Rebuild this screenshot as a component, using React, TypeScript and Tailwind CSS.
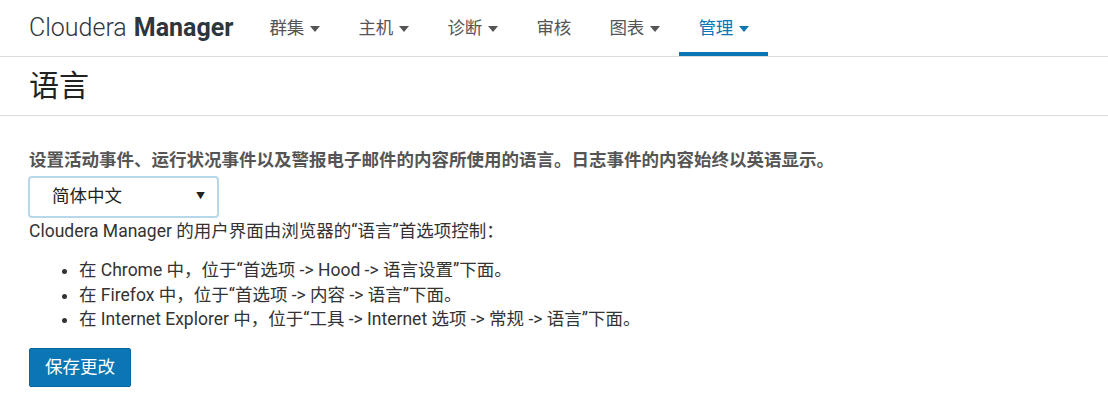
const font = { fontFamily: 'Roboto, "Noto Sans CJK SC", sans-serif' }

function Caret({ className }: { className: string }) {
  return (
    <svg width="10" height="6" viewBox="0 0 10 6" className={className}>
      <path d="M0 0h10L5 6z" fill="currentColor" />
    </svg>
  )
}

const navItems = [
  { label: '群集', caret: true },
  { label: '主机', caret: true },
  { label: '诊断', caret: true },
  { label: '审核', caret: false },
  { label: '图表', caret: true },
  { label: '管理', caret: true, active: true },
]

export default function App() {
  return (
    <div className="w-[1108px] h-[418px] bg-white text-[#333] overflow-hidden" style={font}>
      {/* Top navbar */}
      <header className="h-[57px] flex items-stretch border-b border-[#dcdcdc] pl-[29px]">
        <div className="flex items-center text-[25px] text-[#2d363d] mr-[17px]">
          <span className="font-light">Cloudera</span>
          <span className="font-bold ml-[7px]">Manager</span>
        </div>
        <nav className="flex items-stretch">
          {navItems.map((item) => (
            <div
              key={item.label}
              className={
                item.active
                  ? 'flex items-center gap-[6px] px-[19px] text-[17.5px] text-[#0a77b4] border-b-[4px] border-[#0a77b4] pt-[4px]'
                  : 'flex items-center gap-[6px] px-[19px] text-[17.5px] text-[#555] border-b-[4px] border-transparent pt-[4px]'
              }
            >
              <span>{item.label}</span>
              {item.caret && <Caret className="mt-[1px]" />}
            </div>
          ))}
        </nav>
      </header>

      {/* Page title */}
      <div className="h-[59px] flex items-center border-b border-[#dcdcdc] pl-[29px]">
        <h1 className="text-[30px] text-[#222] leading-none">语言</h1>
      </div>

      {/* Content */}
      <div className="pl-[29px] pt-[32px] text-[17.5px] leading-[24.5px]">
        <p className="font-bold text-[#555]">
          设置活动事件、运行状况事件以及警报电子邮件的内容所使用的语言。日志事件的内容始终以英语显示。
        </p>
        <div className="mt-[3px] -ml-px w-[191px] h-[42px] rounded-[4px] border-2 border-[#b9d7ea] bg-white flex items-center justify-between pl-[22px] pr-[12px] text-[#222]">
          <span>简体中文</span>
          <span className="text-[9px] text-[#222]">▼</span>
        </div>
        <p className="mt-px">Cloudera Manager 的用户界面由浏览器的“语言”首选项控制：</p>
        <ul className="mt-[15px] pl-[50px] list-disc">
          <li>在 Chrome 中，位于“首选项 -&gt; Hood -&gt; 语言设置”下面。</li>
          <li>在 Firefox 中，位于“首选项 -&gt; 内容 -&gt; 语言”下面。</li>
          <li>在 Internet Explorer 中，位于“工具 -&gt; Internet 选项 -&gt; 常规 -&gt; 语言”下面。</li>
        </ul>
        <button className="mt-[16px] h-[39px] px-[15px] bg-[#0a77b4] border border-[#08689e] rounded-[2px] text-white text-[17.5px]">
          保存更改
        </button>
      </div>
    </div>
  )
}
